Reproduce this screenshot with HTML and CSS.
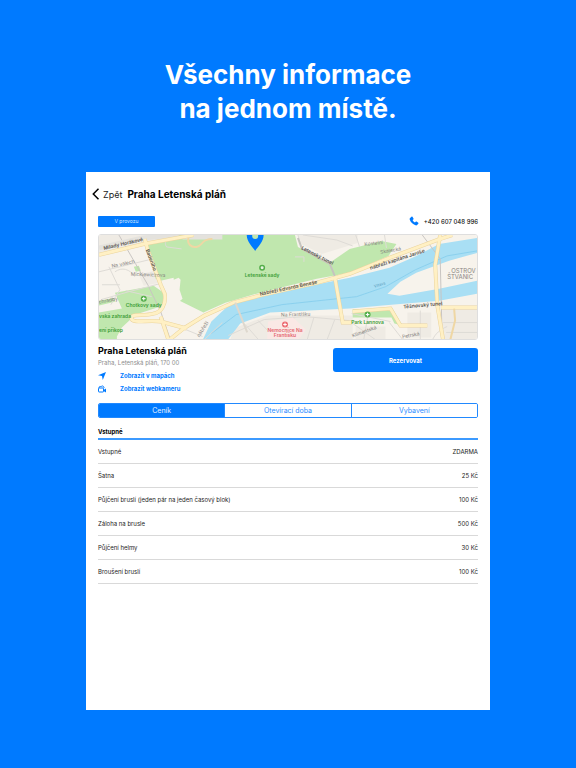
FILE: index.html
```html
<!DOCTYPE html>
<html lang="cs">
<head>
<meta charset="utf-8">
<meta name="viewport" content="width=device-width, initial-scale=1">
<title>Praha Letenská pláň</title>
<link rel="stylesheet" href="styles.css">
</head>
<body>
<h1 class="headline">Všechny informace<br>na jednom místě.</h1>
<main class="card">
  <header class="nav">
    <button class="back" type="button">
      <svg width="8" height="12" viewBox="0 0 8 12" aria-hidden="true"><path d="M6.500 .8 1.300 6l5.200 5.200" fill="none" stroke="#000" stroke-width="1.500"/></svg>
      Zpět
    </button>
    <h2 class="title">Praha Letenská pláň</h2>
  </header>

  <div class="status-row">
    <span class="status">V provozu</span>
    <a class="phone" href="tel:+420607048996">
      <svg width="10" height="10" viewBox="0 0 24 24" aria-hidden="true"><path fill="#007aff" d="M2.500 4.500 6 1.500c.8-.6 1.700-.4 2.200.4l2.600 4c.5.800.3 1.700-.4 2.300L8.600 9.800c1 2.400 3.200 4.600 5.700 5.700l1.700-1.800c.6-.7 1.500-.8 2.300-.3l4 2.600c.8.500 1 1.500.3 2.200l-3 3.300c-1 1-2.500 1.300-4 .8C9 20.200 3.800 15 1.700 8.500c-.5-1.500-.3-3 .8-4z"/></svg>
      +420 607 048 996
    </a>
  </div>

  <svg class="map" viewBox="0 0 380 105" preserveAspectRatio="xMidYMid slice" role="img" aria-label="Mapa okolí">
    <rect width="380" height="106" fill="#f7f3ec"/>
    <path class="block" d="M0 0H86L84 5 48 9 0 21zM40 40l15-4 6 12-16 3zM200 0h60v8l-36 11-21-10zM135 94l35-13h85v25H132zM258 92h30v14h-30zM310 78h24v25h-24zM345 73h35v32h-35z"/>
    <path class="park" d="M48 9 82 0H197l3 12 32 16 20-14 32-8 15 3-8 12-39 17-33 6-57 14-28 8-7 2-22 10-28-14-2-21-13 3-5-2z"/>
    <path class="park" d="M16 58 55 51 65 58v13L37 80 23 93l-5 9v4H0V78l23-4zM35 32l5-1 2 5-5 1zM0 66l16-3v4L0 71zM255 75l40-1 10 17-8-2-3-6h-39z"/>
    <path fill="#f7f3ec" d="m65 52 3-4 12-5 2 2-1 10 3 9-6 5-3 10-11-2z"/>
    <path class="water" d="M104 106 113 87 128 73 139 66 165 61 237 46 252 43 292 33 319 21 342 9 380 3V18L352 26 319 38 303 47 290 59 302 61 342 54 380 46V59L342 66 285 71 252 74 172 78 142 89 129 106z"/>
    <path d="M113 99 138 80l46-10 75-8 29-10 30-17 32-14 30-5" fill="none" stroke="#83cdec" stroke-width=".8"/>
    <path class="rail" d="M20 0 49 50l13 27 10 29M325 0l18 24 2 82"/>
    <path class="street" d="M0 37l50-12M2 65l28-8 31-8M10 32l11 23-9 15M16 37c7-5 15-3 20 5M27 56l26 6M83 14 68 12c-4-6 2-12 13-13M200 0l4 14 28 15 5 12M197 22h9v5M205 0l34 5 16 6M258 0l4 12M287 0l2 13M105 106l19-18M130 101l36-16 41-3 44 4 28 20M147 90l14 16M160 86l19 20M196 82l-3 24M216 83l-7 23M237 85l-8 21M254 79l39 8M256 102l22-8M270 83l-4 23M323 76v30M335 106c3-7 8-11 15-14M346 88h34M349 98h31M3 50h18M70 88l34 14M306 106l-14-18"/>
    <g fill="none" stroke="#e4e2dd" stroke-width="5"><path d="M0 13 44 3 80 0M84 2h40"/></g>
    <g class="road-edge"><path d="M0 20 45 9 95 0"/><path d="M46 4l3 11 13 35 4 9c2 11-4 19-11 20-11 3-25-1-22 6 3 4 17 0 29 2l26 7M62 82l8 24"/><path d="M70 106 85 94 106 81 135 68 165 60 219 48 252 39 292 23 343 4 355 0"/><path d="M237 42l8 46h9M343 0l-5 30 2 40 6 36M255 77l38-3 10 17h27M344 73h36"/></g>
    <g class="road"><path d="M0 20 45 9 95 0"/><path d="M46 4l3 11 13 35 4 9c2 11-4 19-11 20-11 3-25-1-22 6 3 4 17 0 29 2l26 7M62 82l8 24"/><path d="M70 106 85 94 106 81 135 68 165 60 219 48 252 39 292 23 343 4 355 0"/><path d="M237 42l8 46h9M343 0l-5 30 2 40 6 36M255 77l38-3 10 17h27M344 73h36"/></g>
    <path d="M90 3c-2 6 3 10 8 9 7-1 4-8 16-8M357 74l1 12-5 20" fill="none" stroke="#efd7a4" stroke-width="2"/>
    <path d="M137 68l12 30" stroke="#ded8ce" stroke-width="2"/>
    <path d="M200 3l4 11 28 15 5 12" fill="none" stroke="#c5c3be" stroke-width="2"/>
    <path fill="#fae8e5" d="m170 87 25-4 13 12-8 11h-31z"/>
    <g class="label">
      <text transform="translate(5 15) rotate(-13)">Milady Horákové</text>
      <text transform="translate(47 15) rotate(70)">Badeniho</text>
      <text transform="translate(203 14) rotate(27)">Letenský tunel</text>
      <text transform="translate(162 61) rotate(-12)">Nábřeží Edvarda Beneše</text>
      <text transform="translate(273 35) rotate(-18)">nábřeží kapitána Jaroše</text>
      <text transform="translate(306 74) rotate(-5)">Těšnovský tunel</text>
    </g>
    <g class="label minor">
      <text transform="translate(13 33) rotate(-12)">Na valech</text>
      <text transform="translate(32 41) rotate(2)">Mickiewiczova</text>
      <text transform="translate(0 69) rotate(-10)">chradby</text>
      <text transform="translate(101 103) rotate(-58)">nábřeží</text>
      <text transform="translate(183 82) rotate(-2)">Na Františku</text>
      <text transform="translate(267 11) rotate(-6)">Kostelní</text>
      <text transform="translate(283 19) rotate(-10)">Skalecká</text>
      <text transform="translate(255 103) rotate(-20)">Klimentská</text>
      <text transform="translate(305 104) rotate(-10)">Petrská</text>
      <text class="river" transform="translate(277 53) rotate(-17)">Vltava</text>
    </g>
    <g class="place">
      <text x="45" y="72" text-anchor="middle">Chotkovy sady</text>
      <text x="0" y="83">vská zahrada</text>
      <text x="0" y="98">ení příkop</text>
      <text x="164" y="42" text-anchor="middle">Letenské sady</text>
      <text x="270" y="89" text-anchor="middle">Park Lannova</text>
      <text class="hospital" x="187" y="98" text-anchor="middle">Nemocnice Na</text>
      <text class="hospital" x="187" y="103" text-anchor="middle">Františku</text>
    </g>
    <g class="island"><text x="354" y="38">OSTROV</text><text x="350" y="44">ŠTVANIC</text></g>
    <g fill="#54ad4b"><circle cx="45" cy="64" r="3"/><circle cx="164" cy="33" r="3"/><circle cx="270" cy="80" r="3"/></g>
    <circle cx="187" cy="90" r="3" fill="#ec6a72"/>
    <path d="M45 62.200v3.600M43.200 64h3.600M187 88.200v3.600M185.200 90h3.600M270 78.200v3.600M268.200 80h3.600" stroke="#fff" stroke-width="1"/>
    <circle cx="164" cy="33" r="1.500" fill="#e8f5e2"/>
    <path d="M148.500 0h17c0 7-6 12-8.500 16-2.500-4-8.500-9-8.500-16z" fill="#007aff"/>
    <circle cx="157" cy="1" r="3" fill="#c0e7ae"/>
  </svg>

  <section class="venue">
    <div class="venue-info">
      <h3 class="venue-name">Praha Letenská pláň</h3>
      <p class="address">Praha, Letenská pláň, 170 00</p>
      <a class="action" href="#mapy">
        <svg width="8" height="8" viewBox="0 0 16 16" aria-hidden="true"><path d="M16 0 9.500 16 8 8 0 6.500z" fill="#007aff"/></svg>
        Zobrazit v mapách
      </a>
      <a class="action" href="#webkamera">
        <svg width="8" height="8" viewBox="0 0 16 16" aria-hidden="true"><g fill="none" stroke="#007aff" stroke-width="2"><path d="M2 6c0-4 3-4 4-2 1-3 6-3 6 2"/><rect x="1" y="6" width="10" height="8" rx="1"/></g><path d="m11 10 5-3v8l-5-3z" fill="#007aff"/></svg>
        Zobrazit webkameru
      </a>
    </div>
    <button class="reserve" type="button">Rezervovat</button>
  </section>

  <nav class="tabs" aria-label="Informace">
    <button class="tab selected" type="button" aria-pressed="true">Ceník</button>
    <button class="tab" type="button" aria-pressed="false">Otevírací doba</button>
    <button class="tab" type="button" aria-pressed="false">Vybavení</button>
  </nav>

  <table class="prices">
    <thead><tr><th colspan="2" scope="colgroup">Vstupné</th></tr></thead>
    <tbody>
      <tr><td>Vstupné</td><td>ZDARMA</td></tr>
      <tr><td>Šatna</td><td>25 Kč</td></tr>
      <tr><td>Půjčení bruslí (jeden pár na jeden časový blok)</td><td>100 Kč</td></tr>
      <tr><td>Záloha na brusle</td><td>500 Kč</td></tr>
      <tr><td>Půjčení helmy</td><td>30 Kč</td></tr>
      <tr><td>Broušení bruslí</td><td>100 Kč</td></tr>
    </tbody>
  </table>
</main>
</body>
</html>
```
FILE: styles.css
```css
* { box-sizing: border-box; }

body {
  margin: 0;
  min-height: 100vh;
  padding: 58px 86px;
  display: flex;
  flex-direction: column;
  background: #007aff;
  color: #000;
  font-family: Inter, "Liberation Sans", sans-serif;
  font-size: 6px;
}

h1, h2, h3, p { margin: 0; }
button { font: inherit; cursor: pointer; }
a { text-decoration: none; }
svg { display: block; flex: none; }

.headline {
  margin-bottom: 46px;
  color: #fff;
  font-size: 26px;
  font-weight: 700;
  line-height: 34px;
  text-align: center;
}

.card {
  flex: 1;
  padding: 12px;
  background: #fff;
}

.nav {
  display: flex;
  align-items: center;
  gap: 5px;
  height: 20px;
  margin-left: -6px;
}

.back {
  display: flex;
  align-items: center;
  gap: 3px;
  padding: 0;
  border: 0;
  background: none;
  color: #222;
  font-size: 9px;
}

.title { font-size: 10px; font-weight: 700; }

.status-row {
  display: flex;
  align-items: center;
  justify-content: space-between;
  height: 12px;
  margin: 11px 0 7px;
}

.status {
  width: 57px;
  border-radius: 1px;
  background: #007aff;
  color: #d5e9ff;
  font-size: 5px;
  line-height: 11px;
  text-align: center;
}

.phone {
  display: flex;
  align-items: center;
  gap: 5px;
  color: #111;
  font-size: 6px;
  font-weight: 500;
}

.map {
  width: 100%;
  height: auto;
  border: 1px solid #dedede;
  border-radius: 3px;
}

.block { fill: #efebe4; }
.park { fill: #c0e7ae; }
.water { fill: #a9dff4; }
.rail { fill: none; stroke: #c9c5c2; stroke-width: 1; }
.street { fill: none; stroke: #dedbd6; stroke-width: 1; }
.road-edge { fill: none; stroke: #ebd49d; stroke-width: 4; }
.road { fill: none; stroke: #fff0c4; stroke-width: 3; }
.label { fill: #55534f; font-size: 5px; font-weight: 600; }
.minor { fill: #85827d; font-weight: 400; }
.river { fill: #599ebd; font-size: 4px; }
.place { fill: #3c9d37; font-size: 5px; font-weight: 600; }
.hospital { fill: #e46670; }
.island { fill: #8b8783; font-size: 6px; }

.venue {
  display: flex;
  justify-content: space-between;
  align-items: flex-start;
  margin-top: 4px;
}

.venue-name { font-size: 9px; font-weight: 700; line-height: 13px; }
.address { color: #8d8d8d; font-size: 6px; line-height: 12px; }

.action {
  display: flex;
  align-items: center;
  gap: 14px;
  height: 13px;
  color: #007aff;
  font-size: 6px;
  font-weight: 700;
}

.reserve {
  width: 145px;
  height: 24px;
  margin-top: 4px;
  border: 0;
  border-radius: 3px;
  background: #007aff;
  color: #fff;
  font-weight: 700;
}

.tabs {
  display: flex;
  height: 15px;
  margin-top: 8px;
  overflow: hidden;
  border: 1px solid #2189ff;
  border-radius: 2px;
}

.tab {
  flex: 1;
  padding: 0;
  border: 0;
  border-left: 1px solid #2189ff;
  background: #fff;
  color: #2c8dff;
  font-size: 7px;
}
.tab:first-child { border-left: 0; }
.tab.selected { background: #007aff; color: #e4f1ff; }

.prices {
  width: 100%;
  margin-top: 7px;
  border-spacing: 0;
}
.prices th {
  height: 15px;
  padding: 0;
  border-bottom: 2px solid #3c9aff;
  text-align: left;
  font-weight: 700;
}
.prices td {
  height: 24px;
  padding: 0;
  border-bottom: 1px solid #d9d9d9;
  color: #222;
}
.prices td:last-child { text-align: right; }
```
